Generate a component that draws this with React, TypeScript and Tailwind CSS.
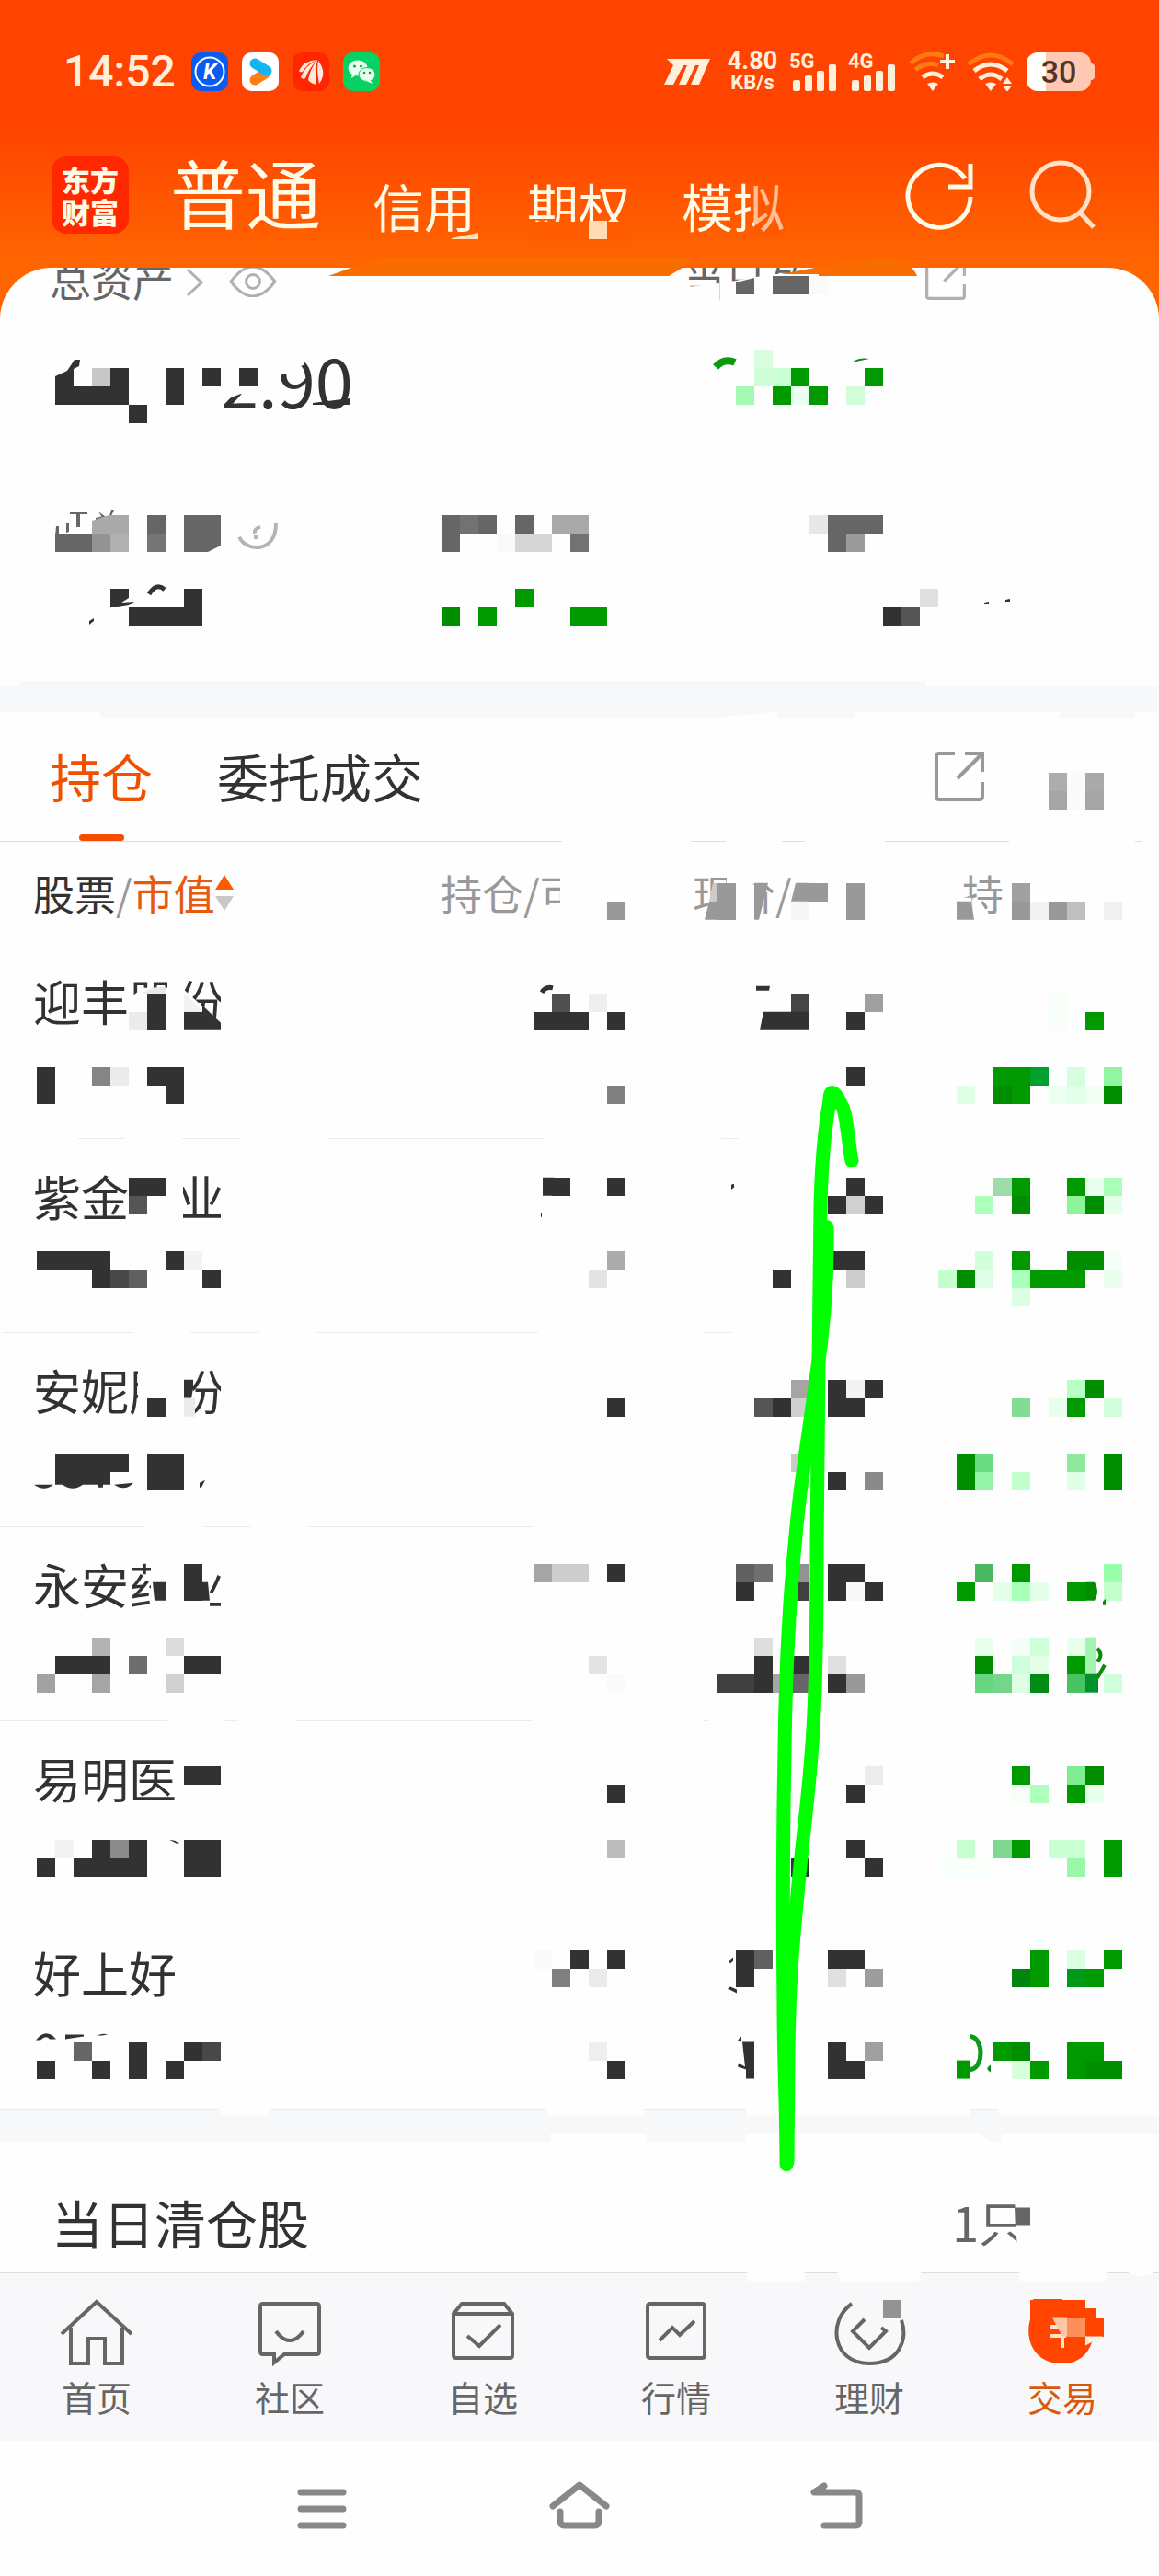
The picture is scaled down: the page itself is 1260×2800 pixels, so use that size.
import type { ReactNode } from 'react';
import { clsx } from 'clsx';

type Cell = [col: number, span: number, color: string];
type Range = [from: number, to: number];

const INK = '#323232';
const GREY = '#666666';
const MUTED = '#999999';
const GREEN = '#009900';
const DEEP = '#008e00';
const PAPER = '#fefefe';
const BLOCK = 20;

// Mosaic blocks, keyed by row on a 20px grid
const mosaic: [row: number, cells: Cell[]][] = [
  [12, [[32, 1, '#ffdcb4']]],
  [15, [[42, 2, GREY], [44, 1, '#fafafa']]],
  [19, [[41, 1, '#d8fde0']]],
  [20, [[5, 1, '#c8c8c8'], [6, 1, INK], [9, 1, INK], [11, 1, INK], [13, 1, INK], [41, 1, '#cffed6'], [42, 1, '#cbffd4'], [43, 1, GREEN], [47, 1, GREEN]]],
  [21, [[3, 4, INK], [9, 1, INK], [40, 1, '#a4fab3'], [42, 1, GREEN], [43, 1, '#eafff0'], [44, 1, GREEN], [46, 1, '#d2fdd9']]],
  [22, [[7, 1, INK]]],
  [28, [[8, 1, GREY], [10, 2, GREY], [24, 1, GREY], [25, 1, '#727272'], [26, 1, GREY], [28, 1, GREY], [30, 2, '#a9a9a9'], [44, 1, '#e8e8e8'], [45, 3, GREY]]],
  [29, [[3, 2, GREY], [5, 1, '#939393'], [6, 1, '#b0b0b0'], [8, 1, '#757575'], [24, 1, GREY], [27, 1, '#fafafa'], [28, 2, '#d6d6d6'], [31, 1, '#727272'], [45, 1, GREY], [46, 1, '#9b9b9b']]],
  [32, [[10, 1, INK], [28, 1, GREEN], [50, 1, '#e0e0e0']]],
  [33, [[7, 4, INK], [24, 1, DEEP], [26, 1, GREEN], [31, 2, GREEN], [48, 1, INK], [49, 1, '#555555']]],
  [42, [[57, 1, '#adadad'], [58, 1, '#fafafa'], [59, 1, '#a9a9a9']]],
  [43, [[57, 1, '#a5a5a5'], [58, 1, '#fafafa'], [59, 1, '#a5a5a5']]],
  [48, [[39, 1, MUTED], [44, 1, MUTED], [46, 1, MUTED], [55, 1, '#a0a0a0']]],
  [49, [[33, 1, MUTED], [39, 1, MUTED], [43, 1, '#f6f6f6'], [46, 1, MUTED], [55, 1, MUTED], [56, 1, '#f3f3f3'], [57, 1, MUTED], [58, 1, '#bfbfbf'], [60, 1, '#f0f0f0']]],
  [54, [[8, 1, INK], [30, 1, '#505050'], [32, 1, '#eeeeee'], [43, 1, '#454545'], [47, 1, '#a0a0a0'], [57, 1, '#f8fff9']]],
  [55, [[7, 1, '#ebebeb'], [8, 1, INK], [29, 3, INK], [33, 1, INK], [46, 1, INK], [57, 1, '#f8fff9'], [59, 1, GREEN]]],
  [58, [[2, 1, INK], [5, 1, '#858585'], [6, 1, '#ebebeb'], [8, 2, INK], [46, 1, INK], [54, 2, GREEN], [56, 1, '#00a02e'], [58, 1, '#d5fedd'], [60, 1, '#92f5a2']]],
  [59, [[2, 1, INK], [9, 1, INK], [33, 1, '#808080'], [52, 1, '#dfffe6'], [54, 1, DEEP], [55, 1, GREEN], [57, 1, '#edfff0'], [58, 1, '#e3ffe8'], [59, 1, '#f2fff4'], [60, 1, DEEP]]],
  [64, [[7, 2, INK], [30, 1, INK], [33, 1, INK], [46, 1, INK], [54, 1, '#9ddca8'], [55, 1, GREEN], [58, 1, GREEN], [59, 1, '#ebfff0'], [60, 1, '#abfdb8']]],
  [65, [[7, 1, '#555555'], [45, 1, INK], [46, 1, '#d0d0d0'], [47, 1, INK], [53, 1, '#adffbc'], [55, 1, DEEP], [58, 1, '#8cf59c'], [59, 1, DEEP], [60, 1, '#e5ffeb']]],
  [68, [[2, 4, INK], [9, 1, INK], [10, 1, '#f3f3f3'], [33, 1, '#ababab'], [45, 2, INK], [53, 1, '#d0ffdb'], [55, 1, GREEN], [58, 2, DEEP], [60, 1, '#f5fff7']]],
  [69, [[5, 1, INK], [6, 1, '#484848'], [7, 1, '#606060'], [11, 1, INK], [32, 1, '#e3e3e3'], [42, 1, INK], [46, 1, '#cdcdcd'], [51, 1, '#c5ffce'], [52, 1, DEEP], [53, 1, '#deffe5'], [55, 1, '#abffbc'], [56, 3, GREEN], [60, 1, '#ebffee']]],
  [70, [[55, 1, '#dcffe3']]],
  [75, [[43, 1, '#a5a5a5'], [45, 1, INK], [46, 1, '#f3f3f3'], [47, 1, INK], [58, 1, '#b9ffc3'], [59, 1, DEEP]]],
  [76, [[8, 1, INK], [33, 1, INK], [41, 1, '#555555'], [42, 1, INK], [43, 1, '#cfcfcf'], [45, 2, INK], [55, 1, '#84dc94'], [57, 1, '#e8ffed'], [58, 1, GREEN], [60, 1, '#d0ffd9']]],
  [79, [[3, 4, INK], [8, 2, INK], [43, 1, '#cacaca'], [52, 1, DEEP], [53, 1, '#69db80'], [58, 1, '#8ee99c'], [60, 1, DEEP]]],
  [80, [[8, 2, INK], [45, 1, INK], [47, 1, '#8a8a8a'], [52, 1, DEEP], [53, 1, '#94f4a7'], [55, 1, '#c4ffce'], [58, 1, '#e0ffe6'], [60, 1, DEEP]]],
  [85, [[10, 1, INK], [29, 1, '#a5a5a5'], [30, 2, '#cdcdcd'], [33, 1, INK], [40, 1, '#606060'], [41, 1, '#707070'], [43, 1, '#929292'], [45, 2, INK], [53, 1, '#4bb864'], [55, 1, GREEN], [60, 1, '#99ffab']]],
  [86, [[10, 1, INK], [40, 1, INK], [43, 1, '#404040'], [45, 1, INK], [46, 1, '#f8f8f8'], [47, 1, INK], [52, 1, GREEN], [54, 1, '#e4ffe9'], [55, 1, '#a8ffb8'], [56, 1, '#e3ffe8'], [58, 1, GREEN], [60, 1, '#c5ffce']]],
  [89, [[5, 1, '#b3b3b3'], [9, 1, '#dcdcdc'], [41, 1, '#dedede'], [53, 1, '#e8ffec'], [55, 1, '#f3fff6'], [56, 1, '#cfffd9'], [58, 1, '#e8ffec']]],
  [90, [[3, 3, INK], [7, 1, '#6e6e6e'], [10, 2, INK], [32, 1, '#e3e3e3'], [41, 1, INK], [43, 1, INK], [45, 1, '#e0e0e0'], [53, 1, DEEP], [55, 1, '#cfffda'], [56, 1, '#e5ffe9'], [58, 1, GREEN]]],
  [91, [[2, 1, '#a2a2a2'], [5, 1, '#a5a5a5'], [9, 1, '#d1d1d1'], [33, 1, '#fafafa'], [39, 2, '#404040'], [41, 1, INK], [42, 1, '#a5a5a5'], [43, 1, GREY], [45, 1, INK], [46, 1, MUTED], [53, 1, '#66d681'], [54, 1, '#75d58a'], [55, 1, '#dfffe5'], [56, 1, '#008c14'], [58, 1, '#48c360'], [60, 1, '#cfffda']]],
  [96, [[10, 2, INK], [47, 1, '#ececec'], [55, 1, GREEN], [58, 1, '#7eed90'], [59, 1, DEEP]]],
  [97, [[33, 1, INK], [46, 1, INK], [55, 1, '#f5fff7'], [56, 1, '#afffbd'], [58, 1, GREEN], [59, 1, '#e8ffeb']]],
  [100, [[3, 1, '#f3f3f3'], [5, 1, INK], [6, 1, '#8c8c8c'], [7, 1, INK], [10, 2, INK], [33, 1, '#bcbcbc'], [46, 1, INK], [52, 1, '#c8ffd2'], [54, 1, '#80d890'], [55, 1, GREEN], [57, 2, '#caffd4'], [60, 1, GREEN]]],
  [101, [[2, 1, INK], [4, 4, INK], [10, 2, INK], [43, 1, INK], [47, 1, INK], [51, 3, '#f9fff9'], [58, 1, '#99f7a7'], [60, 1, GREEN]]],
  [106, [[29, 1, '#fafafa'], [31, 1, INK], [33, 1, INK], [40, 1, INK], [41, 1, '#606060'], [45, 2, INK], [56, 1, GREEN], [58, 1, '#d8ffe0'], [60, 1, GREEN]]],
  [107, [[30, 1, '#808080'], [32, 1, '#ebebeb'], [40, 1, INK], [45, 1, '#e0e0e0'], [47, 1, '#9d9d9d'], [55, 1, '#00850f'], [56, 1, GREEN], [58, 1, '#009a1b'], [59, 1, GREEN]]],
  [111, [[4, 1, GREY], [7, 1, INK], [10, 1, INK], [11, 1, '#484848'], [32, 1, '#eeeeee'], [45, 1, INK], [47, 1, '#a0a0a0'], [54, 1, GREEN], [55, 1, DEEP], [58, 2, GREEN]]],
  [112, [[2, 1, INK], [5, 1, INK], [7, 1, INK], [9, 1, INK], [33, 1, INK], [45, 2, INK], [55, 1, '#d8ffdc'], [56, 1, GREEN], [58, 1, GREEN], [59, 2, DEEP]]],
  [125, [[48, 1, '#939393'], [56, 3, '#ff4500']]],
  [126, [[58, 1, '#ff8f5a'], [59, 1, '#ff4500']]],
];

// Parts of each divider that are wiped out
const wipedLines: [y: number, ranges: Range[]][] = [
  [914, [[611, 751], [789, 850], [875, 962], [1097, 1234], [1242, 1260]]],
  [1237, [[0, 85], [136, 198], [262, 355], [592, 784], [803, 1260]]],
  [1448, [[0, 2], [145, 207], [282, 344], [585, 765], [796, 1260]]],
  [1659, [[158, 221], [273, 335], [581, 1260]]],
  [1870, [[182, 245], [259, 321], [579, 765], [771, 1260]]],
  [2081, [[210, 374], [581, 691], [792, 1054], [1058, 1260]]],
];

const wipes = [
  // total assets figure
  'M236 384H282V430L262 428L252 432L236 436Z M294 384H334L330 397L319 400L318 404L304 408L296 413Z',
  // today's profit label
  'M740 313L782 308V340H740Z M794 306L828 300V340H794Z M834 298H890V340H834Z',
  // column titles
  'M609 946H660V1000H609Z M590 984H660V1000H590Z M776 960L770 1000H820V946H790V960Z M818 946H845V962H818Z M1036 976H1056L1059 1000H1036Z',
  // stock names
  'M140 1086L155 1074H182V1060H200V1122H140Z M200 1076L240 1112V1122H200Z M240 1060H250V1122H240Z',
  'M140 1270H199V1330H140Z M240 1270H250V1334H240Z',
  'M150 1482H210V1545H150Z M240 1482H250V1545H240Z',
  'M164 1692H228V1756H164Z M224 1692H250V1708H224Z M240 1692H250V1756H240Z',
  // cleared count
  'M1103 2390H1134V2450H1106Z',
  // grey bands
  'M0 739H22V746H0Z M1006 739H1260V746H1006Z M0 774H109V781H0Z M779 780L845 774V781H779Z M928 774H1154L1150 781H930Z M1233 774H1260V781H1233Z',
  'M237 2291H296L291 2300H242Z M594 2291H700V2300H595Z M598 2320H702V2329H598Z M811 2291H1054V2300H811Z M811 2320H1065L1078 2329H811Z M1084 2291H1260V2300H1086Z M1089 2320H1260V2329H1089Z',
  // bottom bar edge
  'M812 2469H875V2480H812Z M910 2469H1002L998 2480H914Z M1108 2469H1204V2480H1108Z M1224 2469Q1240 2480 1257 2469Z',
];

const inkBits = [
  'M60 409L73 403L81 391H87L86 398L80 401V420H60Z',
  'M340 438L380 433V440H340Z',
  'M120 640H140V650L132 655L146 654L140 658L128 660H120Z',
  'M97 675L102 672V675L97 679Z',
  'M1070 655L1075 654V656H1070Z M1093 652L1098 651V654H1093Z',
  'M220 1093L240 1112V1120H200V1100H220Z',
  'M822 1072H837L836 1077H822Z M830 1100H880V1120H826Z',
  'M590 1280H602V1300H590Z M588 1319H589V1323H588Z M795 1288L798 1287V1291L795 1293Z',
  'M200 1500H210V1510L208 1520H200Z',
  'M60 1600H120V1614H60Z M37 1614H58Q48 1622 37 1614Z M68 1614H90Q79 1622 68 1614Z M107 1614H112V1617H107Z M124 1614L145 1612Q136 1622 124 1614Z M217 1612L223 1609L219 1617H217Z',
  'M166 1720H180V1740H168Z M220 1720H226L228 1740H220Z',
  'M184 2000L190 2001L195 2004H192Z',
  'M792 2132L797 2128V2132L794 2135Z M791 2162L794 2160L801 2163V2167Z',
  'M39 2218Q50 2204 61 2217L54 2217Q50 2212 44 2218Z M71 2212H91V2214L71 2217Z M105 2213Q112 2210 117 2212L111 2213Z',
  'M802 2218L806 2214V2220Z M807 2220H820V2260H811V2250L802 2247L803 2243L810 2247Z',
];

function Redactions() {
  return (
    <svg
      viewBox="0 0 1260 2800"
      preserveAspectRatio="none"
      className="pointer-events-none absolute inset-0 h-full w-full"
      shapeRendering="geometricPrecision"
      aria-hidden="true"
    >
      {/* header smears */}
      <path d="M575 241H690V262H575Z" fill="#ff5c00" />
      <path d="M820 196H854V256H820Z" fill="#ff5400" opacity="0.35" />
      <path d="M491 259L520 253V260H491Z" fill="#ffe0b8" />
      <path d="M357 300L382 291L420 280H750L742 291L727 300Z" fill="#f96d00" />
      <path d="M838 300L886 291L940 283Q972 278 984 284Q993 291 997 300Z" fill="#f96d00" />

      <path d={wipes.join(' ')} fill={PAPER} />
      {wipedLines.map(([y, ranges]) =>
        ranges.map(([from, to]) => (
          <rect key={`${y}-${from}`} x={from} y={y - 1} width={to - from} height="3" fill={PAPER} />
        ))
      )}

      <g shapeRendering="crispEdges">
        {mosaic.map(([row, cells]) =>
          cells.map(([col, span, color]) => (
            <rect
              key={`${row}-${col}`}
              x={col * BLOCK}
              y={row * BLOCK}
              width={span * BLOCK}
              height={BLOCK}
              fill={color}
            />
          ))
        )}
      </g>

      {/* leftovers of the glyphs under the mosaic */}
      <path d={inkBits.join(' ')} fill={INK} />
      <path d="M76 556H95V559H87V573H83V559H76Z M72 568H75V578L72 579Z M61 572H64V580L60 583Z M107 556L115 562L112 564Z M121 554H124L121 561H119Z M104 563L112 561V564L104 566Z" fill={GREY} />
      <path d="M100 566L118 560H140V580H100Z" fill="#a9a9a9" />
      <path d="M200 580H240V593L226 600H200Z M800 307L820 302V320H800Z" fill={GREY} />
      <path d="M260 584C268 600 300 602 300 569" fill="none" stroke="#b5b5b5" strokeWidth="4" />
      <path d="M277 580Q276 575 283 573M276 584H281" fill="none" stroke="#b5b5b5" strokeWidth="4" />
      <path d="M162 646Q170 633 179 641" fill="none" stroke={INK} strokeWidth="5" />
      <path d="M778 399Q787 389 799 394" fill="none" stroke="#0b9a0b" strokeWidth="8" />
      <path d="M926 394Q934 388 945 390Q935 392 926 394Z" fill="#0b8a0b" />
      <path d="M775 960H780V980H771Z" fill="#cccccc" />
      <path d="M771 980H780V1000H766Z M820 960H835L825 1000H820Z M865 960H880V980H860Z M1040 980H1056L1059 1000H1040Z" fill={MUTED} />
      <path d="M155 1080L165 1074L180 1073V1080Z" fill="#e8e8e8" />
      <path d="M200 1080L220 1098V1100H200Z" fill="#f3f3f3" />
      <path d="M589 1079Q593 1072 601 1074" fill="none" stroke={INK} strokeWidth="5" />
      <path d="M200 1520H212V1540H200Z" fill="#ebebeb" />
      <path d="M1180 1720H1190Q1196 1730 1190 1740H1180Z M1199 1741L1202 1738V1745H1199Z" fill="#008e00" />
      <path d="M1180 1780H1192V1820H1180Z" fill="#a4f3b2" />
      <path d="M1180 1820H1194V1840H1180Z" fill="#00912e" />
      <path d="M1193 1792Q1200 1800 1193 1806M1201 1810L1193 1824" fill="none" stroke="#0b8a0b" strokeWidth="4" />
      <path d="M1040 2240H1054V2260H1040Z" fill={GREEN} />
      <path d="M1054 2214C1070 2214 1070 2250 1054 2250" fill="none" stroke="#0b9a1b" strokeWidth="5" />
      <path d="M1077 2245V2253Q1070 2249 1077 2245Z" fill="#0b8a1b" />
      <path d="M1103 2400H1120V2420H1104Z" fill={GREY} />
      <path d="M1144 2520H1160V2540H1155Z" fill="#ffc5a8" />
      <path d="M1180 2540H1199L1180 2550Z" fill="#ffefe4" />

      {/* green marker */}
      <g fill="none" stroke="#00ff00" strokeWidth="15" strokeLinecap="round" strokeLinejoin="round">
        <path d="M926 1262C922 1240 920 1208 915 1202C910 1190 902 1180 902 1196C896 1230 893 1270 892 1310L890 1480L888 1680C888 1760 887 1830 884 1880C880 1950 872 2000 867 2060C861 2120 858 2160 857 2230L856 2350" />
        <path d="M899 1334C900 1400 895 1450 887 1500C878 1570 870 1610 865 1670C856 1760 854 1830 853 1900C851 2000 851 2100 852 2180C852 2240 855 2290 855 2353" />
      </g>
    </svg>
  );
}

function SignalBars({ label }: { label: string }) {
  return (
    <div className="relative h-[42px] w-[50px]">
      <span className="absolute -left-0.5 -top-0.5 text-[22px] font-bold leading-6">{label}</span>
      <svg viewBox="0 0 50 42" className="h-full w-full" fill="currentColor">
        <rect x="2" y="30" width="8" height="12" rx="2" />
        <rect x="15" y="25" width="8" height="17" rx="2" />
        <rect x="28" y="20" width="8" height="22" rx="2" />
        <rect x="41" y="13" width="8" height="29" rx="2" />
      </svg>
    </div>
  );
}

function StatusBar() {
  return (
    <div className="flex h-[60px] items-center justify-between pl-[69px] pr-[74px] font-[Roboto,sans-serif] text-[#fff0dc]">
      <div className="flex items-center gap-[15px]">
        <span className="w-[124px] text-[48px] font-medium leading-[60px]">14:52</span>
        <svg viewBox="0 0 40 42" className="h-[42px] w-10">
          <rect width="40" height="42" rx="10" fill="#0a5cf0" />
          <circle cx="20" cy="21" r="15.5" fill="none" stroke="#fff" strokeWidth="2" />
          <text x="20" y="29" textAnchor="middle" fontSize="23" fontWeight="700" fontStyle="italic" fill="#fff">K</text>
        </svg>
        <svg viewBox="0 0 40 42" className="h-[42px] w-10">
          <rect width="40" height="42" rx="10" fill="#fff" />
          <path d="M14 30L25 23" stroke="#ff8010" strokeWidth="11" strokeLinecap="round" />
          <path d="M14 12L27 20" stroke="#12b4f8" strokeWidth="11" strokeLinecap="round" />
        </svg>
        <svg viewBox="0 0 40 42" className="h-[42px] w-10">
          <rect width="40" height="42" rx="10" fill="#ff2600" />
          <path d="M7 20Q12 9 26 8Q15 13 11 21Q8 22 7 20Z M9 27Q14 14 27 8Q18 17 14 28Q11 30 9 27Z M17 30Q19 18 27 8Q24 20 26 35Q20 34 17 30Z M29 34Q26 20 28 9Q38 22 29 34Z" fill="#ffe8dc" />
        </svg>
        <svg viewBox="0 0 40 42" className="h-[42px] w-10">
          <rect width="40" height="42" rx="10" fill="#07d160" />
          <ellipse cx="16" cy="17" rx="10.5" ry="8.5" fill="#e8fff0" />
          <path d="M10 23L9 28L15 24Z" fill="#e8fff0" />
          <ellipse cx="26" cy="24" rx="9" ry="7.5" fill="#e8fff0" stroke="#07d160" />
          <path d="M29 29L32 34L25 31Z" fill="#e8fff0" />
          <g fill="#07a050">
            <circle cx="12.5" cy="15" r="1.5" />
            <circle cx="19.5" cy="15" r="1.5" />
            <circle cx="23" cy="22" r="1.3" />
            <circle cx="29" cy="22" r="1.3" />
          </g>
        </svg>
      </div>

      <div className="flex items-center gap-[14px]">
        <svg viewBox="0 0 50 28" className="mr-1 h-7 w-[50px]" fill="currentColor">
          <path d="M3 0H50L38 28H29L38 7H34L24 28H16L25 7H21L10 28H0L10 7Z" />
        </svg>
        <div className="flex w-[56px] flex-col items-center font-bold">
          <span className="text-[27px] leading-6">4.80</span>
          <span className="text-[22px] leading-6">KB/s</span>
        </div>
        <SignalBars label="5G" />
        <SignalBars label="4G" />
        <svg viewBox="0 0 50 42" className="h-[42px] w-[50px]" fill="none" strokeWidth="5">
          <path d="M2 12Q18 -3 38 4M7 19Q20 9 32 14" stroke="#ff7a10" />
          <path d="M15 27Q26 19 37 27" stroke="currentColor" />
          <path d="M20 34Q26 31 32 34L26 42Z" fill="currentColor" stroke="none" />
          <path d="M34 10H50M42 2V18" stroke="currentColor" strokeWidth="4" />
        </svg>
        <svg viewBox="0 0 50 42" className="h-[42px] w-[50px]" fill="none" strokeWidth="5">
          <path d="M1 13Q25 -7 49 13" stroke="#ff7a10" />
          <path d="M7 20Q25 6 43 20M13 29Q25 19 37 29" stroke="currentColor" />
          <path d="M19 34Q25 31 31 34L25 42Z" fill="currentColor" stroke="none" />
          <path d="M38 34L43 27L48 34ZM38 36H48L43 43Z" fill="currentColor" stroke="none" />
        </svg>
        <div className="relative h-[42px] w-[70px]">
          <div className="flex h-full items-center justify-center rounded-xl bg-gradient-to-r from-white from-30% to-[#ffc9b3] to-30%">
            <span className="text-[34px] font-medium leading-[42px] text-[#553428]">30</span>
          </div>
          <span className="absolute -right-1 top-3 h-[18px] w-1 rounded-r bg-[#ffc9b3]" />
        </div>
      </div>
    </div>
  );
}

const accountTabs = ['普通', '信用', '期权', '模拟'];

function Header() {
  return (
    <header className="bg-gradient-to-b from-[#ff4300] from-40% to-[#ff6600] to-85% pb-[93px] pt-12">
      <StatusBar />
      <div className="mt-[62px] flex h-[84px] items-start pl-14 pr-[69px] text-[#fffbe8]">
        <div className="flex h-[84px] w-[84px] items-center justify-center rounded-2xl bg-[#ff2800]">
          <p className="w-16 text-center text-[31px] font-black leading-[35px]">东方财富</p>
        </div>
        <nav className="ml-[45px] flex flex-1 items-start gap-14">
          {accountTabs.map((tab, i) => (
            <button
              key={tab}
              className={clsx(i === 0 ? 'text-[82px] leading-[76px]' : 'text-[56px] leading-[106px]')}
            >
              {tab}
            </button>
          ))}
        </nav>
        <button aria-label="刷新" className="mr-[58px] mt-1">
          <svg viewBox="0 0 76 76" className="h-[76px] w-[76px]" fill="none" stroke="currentColor" strokeWidth="5">
            <path d="M72 40A34 34 0 1 1 66 20M72 4V29H48" />
          </svg>
        </button>
        <button aria-label="搜索" className="mt-1">
          <svg viewBox="0 0 74 76" className="h-[76px] w-[74px]" fill="none" stroke="#ffe2c8" strokeWidth="5">
            <circle cx="36" cy="34" r="31" />
            <path d="M57 57L72 73" />
          </svg>
        </button>
      </div>
    </header>
  );
}

function ExternalIcon({ className }: { className: string }) {
  return (
    <svg viewBox="0 0 54 54" className={className} fill="none" stroke="currentColor" strokeWidth="4">
      <path d="M22 2H5Q2 2 2 5V49Q2 52 5 52H49Q52 52 52 49V33M33 2H52V22M51 3L25 29" />
    </svg>
  );
}

function Assets() {
  return (
    <section className="-mt-[56px] overflow-hidden rounded-t-[56px] bg-[#fefefe] pb-[288px]">
      {/* this row is scrolled halfway under the header */}
      <div className="-mt-[7px] flex h-10 items-center pl-[54px] pr-[210px] text-[45px] leading-10 text-[#666]">
        <span>总资产</span>
        <svg viewBox="0 0 18 30" className="ml-3.5 mt-1.5 h-[30px] w-[18px]" fill="none" stroke="#b0b0b0" strokeWidth="3">
          <path d="M1 1L16 15L1 29" />
        </svg>
        <svg viewBox="0 0 52 34" className="ml-7 mt-1 h-[34px] w-[52px]" fill="none" stroke="#b0b0b0" strokeWidth="3">
          <path d="M2 17Q26 -15 50 17Q26 49 2 17Z" />
          <circle cx="26" cy="17" r="7.5" />
        </svg>
        <span className="ml-[442px]">当日盈</span>
        <ExternalIcon className="ml-auto h-[44px] w-[44px] text-[#b0b0b0]" />
      </div>
      <p className="mt-12 pl-60 text-[74px] leading-[80px] text-[#323232]">2.90</p>
    </section>
  );
}

const holdings = ['迎丰股份', '紫金矿业', '安妮股份', '永安药业', '易明医', '好上好'];

function Holdings() {
  return (
    <section className="bg-[#fefefe]">
      <div className="flex h-[135px] items-start border-b border-[#dddddd] pl-[54px] pr-[190px] text-[56px] leading-[60px]">
        <button className="relative flex h-[134px] flex-col items-center pt-[33px] text-[#f05000]">
          持仓
          <span className="absolute bottom-0 h-[7px] w-[49px] rounded-full bg-[#f44d00]" />
        </button>
        <button className="ml-[70px] pt-[33px] text-[#323232]">委托成交</button>
        <button aria-label="分享持仓" className="ml-auto mt-[37px]">
          <ExternalIcon className="h-[54px] w-[54px] text-[#999]" />
        </button>
      </div>

      <table className="w-full table-fixed border-collapse text-left">
        <colgroup>
          <col />
          <col className="w-[274px]" />
          <col className="w-[293px]" />
          <col className="w-[214px]" />
        </colgroup>
        <thead>
          <tr className="h-[111px] align-top text-[45px] leading-[60px] text-[#999]">
            <th scope="col" className="pl-9 pt-[26px] font-normal">
              <span className="flex items-center">
                <span className="text-[#323232]">股票</span>/<span className="text-[#e8590c]">市值</span>
                <svg viewBox="0 0 20 40" className="h-10 w-5">
                  <path d="M10 0L20 16H0Z" fill="#ff5a00" />
                  <path d="M0 23H20L10 39Z" fill="#c8c8c8" />
                </svg>
              </span>
            </th>
            <th scope="col" className="pt-[26px] font-normal">持仓/可</th>
            <th scope="col" className="pt-[26px] font-normal">现价/</th>
            <th scope="col" className="pt-[26px] font-normal">持</th>
          </tr>
        </thead>
        <tbody>
          {holdings.map((name) => (
            <tr key={name} className="h-[211px] border-b border-[#ececec] align-top">
              <td className="pl-9 pt-8 text-[52px] leading-[60px] text-[#323232]">{name}</td>
              <td />
              <td />
              <td />
            </tr>
          ))}
        </tbody>
      </table>
    </section>
  );
}

type NavItem = { label: string; icon: ReactNode; active?: boolean };

const navItems: NavItem[] = [
  {
    label: '首页',
    icon: <path d="M2 38L40 3L78 38M12 31V70H31V43H49V70H68V31" />,
  },
  {
    label: '社区',
    icon: <path d="M11 5H69Q72 5 72 8V57Q72 60 69 60H34L23 69V60H11Q8 60 8 57V8Q8 5 11 5ZM25 35Q40 55 55 35" />,
  },
  {
    label: '自选',
    icon: <path d="M8 16L17 5H63L72 16V61Q72 64 69 64H11Q8 64 8 61ZM8 16H72M23 40L36 51L59 28" />,
  },
  {
    label: '行情',
    icon: <path d="M12 5H68Q71 5 71 8V61Q71 64 68 64H12Q9 64 9 61V8Q9 5 12 5ZM22 45L36 31L44 39L60 24" />,
  },
  {
    label: '理财',
    icon: <path d="M21 5C-6 24 0 70 40 70C73 70 82 44 75 23M35 22L22 35L40 53L58 35L53 31" />,
  },
  {
    label: '交易',
    active: true,
    icon: (
      <>
        <path d="M8 0H40V10H76C77 30 76 70 40 70C0 70 -4 28 12 8Z" fill="#ff4500" stroke="none" />
        <path d="M26 30H44M26 40H44M40 36V53M30 18L40 30" stroke="#ffe2cc" strokeWidth="4" />
      </>
    ),
  },
];

function BottomNav() {
  return (
    <nav className="grid h-[183px] grid-cols-6 border-t border-[#dedede] bg-[#f8f8fa]">
      {navItems.map(({ label, icon, active }) => (
        <a
          key={label}
          href="#"
          className={clsx(
            'flex flex-col items-center pt-[28px] text-[38px] leading-[40px]',
            active ? 'text-[#d9580f]' : 'text-[#666]'
          )}
        >
          <svg viewBox="0 0 80 74" className="mb-[12px] h-[74px] w-20" fill="none" stroke="currentColor" strokeWidth="4">
            {icon}
          </svg>
          {label}
        </a>
      ))}
    </nav>
  );
}

function SystemNav() {
  return (
    <div className="flex h-[147px] items-center justify-center gap-[212px] bg-[#fefefe] text-[#888]">
      <button aria-label="菜单">
        <svg viewBox="0 0 68 52" className="h-[52px] w-[68px]" fill="none" stroke="currentColor" strokeWidth="7" strokeLinecap="round">
          <path d="M11 9H57M11 27H57M11 45H57" />
        </svg>
      </button>
      <button aria-label="主页">
        <svg viewBox="0 0 68 52" className="h-[52px] w-[68px] overflow-visible" fill="none" stroke="currentColor" strokeWidth="7" strokeLinecap="round" strokeLinejoin="round">
          <path d="M5 24L34 1L63 24M13 30V40Q13 45 18 45H50Q55 45 55 40V30" />
        </svg>
      </button>
      <button aria-label="返回">
        <svg viewBox="0 0 68 52" className="h-[52px] w-[68px] overflow-visible" fill="none" stroke="currentColor" strokeWidth="7" strokeLinecap="round" strokeLinejoin="round">
          <path d="M20 2L9 9H54Q58 9 58 13V41Q58 45 54 45H20" />
        </svg>
      </button>
    </div>
  );
}

export default function App() {
  return (
    <div className="relative overflow-hidden bg-[#fefefe] font-['Noto_Sans_CJK_SC',sans-serif]">
      <Header />
      <Assets />
      <div className="h-10 bg-[#f7f8fa]" />
      <Holdings />
      <div className="h-[35px] bg-[#f7f8fa]" />
      <div className="flex h-[142px] items-center justify-between bg-[#fefefe] pl-14 pr-[144px] pt-8 text-[56px] leading-[60px] text-[#323232]">
        <h2>当日清仓股</h2>
        <span className="text-[52px] text-[#666]">1只</span>
      </div>
      <BottomNav />
      <SystemNav />
      <Redactions />
    </div>
  );
}
